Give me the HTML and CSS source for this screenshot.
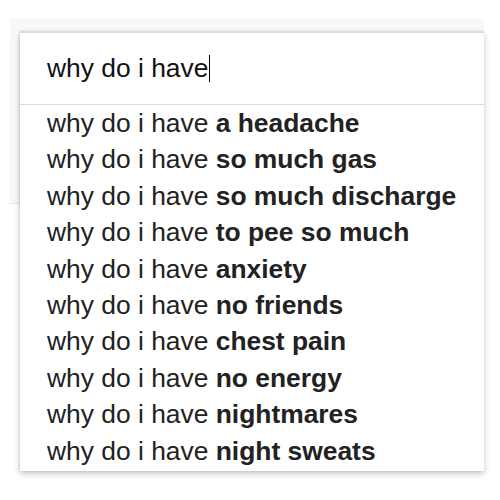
FILE: index.html
```html
<!DOCTYPE html>
<html>
<head>
<meta charset="utf-8">
<link rel="stylesheet" href="styles.css">
</head>
<body>
<div class="header"></div>
<div class="box">
  <div class="input"><span class="typed">why do i have</span><span class="caret"></span></div>
  <ul class="list">
    <li>why do i have <b>a headache</b></li>
    <li>why do i have <b>so much gas</b></li>
    <li>why do i have <b>so much discharge</b></li>
    <li>why do i have <b>to pee so much</b></li>
    <li>why do i have <b>anxiety</b></li>
    <li>why do i have <b>no friends</b></li>
    <li>why do i have <b>chest pain</b></li>
    <li>why do i have <b>no energy</b></li>
    <li>why do i have <b>nightmares</b></li>
    <li>why do i have <b>night sweats</b></li>
  </ul>
</div>
</body>
</html>
```
FILE: styles.css
```css
html, body {
  margin: 0;
  padding: 0;
  background: #fff;
  font-family: "Liberation Sans", Arial, sans-serif;
}
.header {
  margin: 18px 16px 0 10px;
  height: 185px;
  background: #f8f8f8;
  border-bottom: 1px solid #e8e8e8;
}
.box {
  position: absolute;
  left: 20px;
  top: 31px;
  width: 464px;
  background: #fff;
  border-top: 2px solid #dcdcdc;
  box-shadow: 0 3px 6px rgba(0,0,0,0.22), -1px 0 2px rgba(0,0,0,0.08);
}
.input {
  height: 71px;
  display: flex;
  align-items: center;
  padding-left: 27px;
  font-size: 26.4px;
  color: #111;
  border-bottom: 1px solid #dadada;
}
.caret {
  display: inline-block;
  width: 1px;
  height: 27px;
  background: #000;
  margin-left: 1px;
}
.list {
  list-style: none;
  margin: 0;
  padding: 0 0 2px 0;
}
.list li {
  height: 36.4px;
  line-height: 36.4px;
  padding-left: 27px;
  font-size: 26.4px;
  color: #222;
  white-space: nowrap;
}
.list b {
  font-weight: bold;
}
```
